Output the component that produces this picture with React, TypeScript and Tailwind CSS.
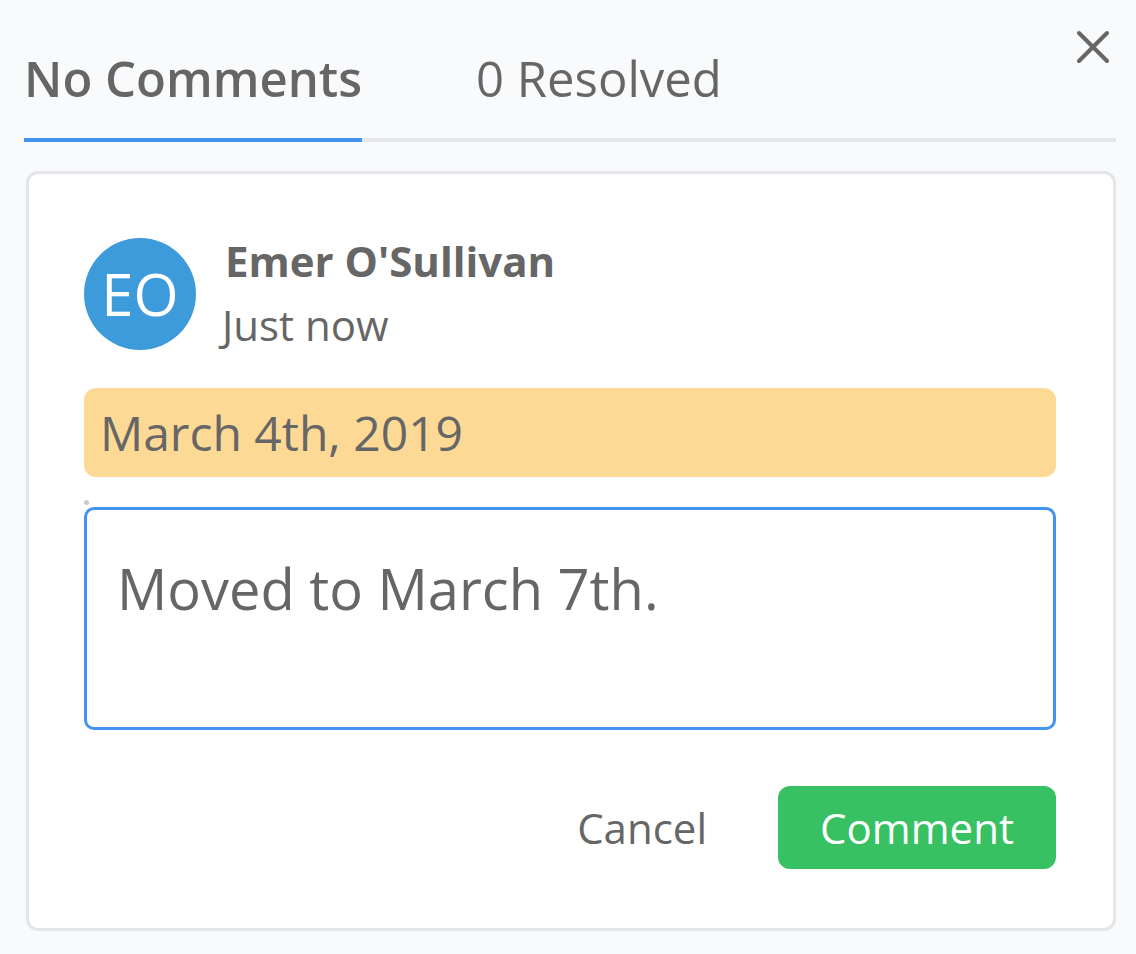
import { useState } from 'react'

export default function App() {
	const [tab, setTab] = useState<'open' | 'resolved'>('open')

	return (
		<div className="w-[1136px] h-[954px] bg-[#f9fafc] pl-[24px] pr-[20px] text-[#666666] font-['Open_Sans',sans-serif]">
			<div className="relative flex border-b-[4px] border-[#e6e7ea] pt-[46px]">
				<button
					onClick={() => setTab('open')}
					className={`-mb-[4px] border-b-[4px] pb-[28px] text-[49px] leading-[64px] font-semibold ${tab === 'open' ? 'border-[#4394ee]' : 'border-transparent'}`}
				>
					No Comments
				</button>
				<button
					onClick={() => setTab('resolved')}
					className={`-mb-[4px] ml-[114px] border-b-[4px] pb-[28px] text-[49px] leading-[64px] font-normal ${tab === 'resolved' ? 'border-[#4394ee]' : 'border-transparent'}`}
				>
					0 Resolved
				</button>
				<button className="absolute right-[4px] top-[28px] p-[2px]" aria-label="Close">
					<svg width="34" height="34" viewBox="0 0 34 34" fill="none" stroke="#666666" strokeWidth="4" strokeLinecap="round">
						<line x1="3" y1="3" x2="31" y2="31" />
						<line x1="31" y1="3" x2="3" y2="31" />
					</svg>
				</button>
			</div>

			<div className="mt-[29px] ml-[2px] rounded-[12px] border-[3px] border-[#e4e5e9] bg-white pl-[55px] pr-[57px] pt-[64px] pb-[59px]">
				<div className="flex items-start">
					<div className="flex h-[112px] w-[112px] shrink-0 items-center justify-center rounded-full bg-[#3d9bdc] text-[58px] leading-none text-white">
						EO
					</div>
					<div className="ml-[29px] flex flex-col">
						<span className="-mt-[3px] text-[42px] leading-[52px] font-bold">Emer O'Sullivan</span>
						<span className="mt-[12px] -ml-[3px] text-[42px] leading-[52px]">Just now</span>
					</div>
				</div>

				<div className="mt-[37px] rounded-[12px] bg-[#fcd994] px-[16px] py-[12px] text-[48px] leading-[65px]">
					March 4th, 2019
				</div>

				<div className="relative mt-[30px]">
					<span className="absolute -top-[7px] left-[0px] h-[5px] w-[5px] rounded-full bg-[#c8c8c8]" />
					<textarea
						defaultValue="Moved to March 7th."
						className="block h-[223px] w-full resize-none rounded-[10px] border-[3px] border-[#4393f0] px-[30px] pt-[40px] text-[56px] leading-[76px] text-[#666666] outline-none"
					/>
				</div>

				<div className="mt-[56px] flex items-center justify-end">
					<button className="text-[42px] leading-[56px]">Cancel</button>
					<button className="ml-[71px] h-[83px] w-[278px] rounded-[12px] bg-[#38c162] text-[42px] leading-[56px] text-white">
						Comment
					</button>
				</div>
			</div>
		</div>
	)
}
